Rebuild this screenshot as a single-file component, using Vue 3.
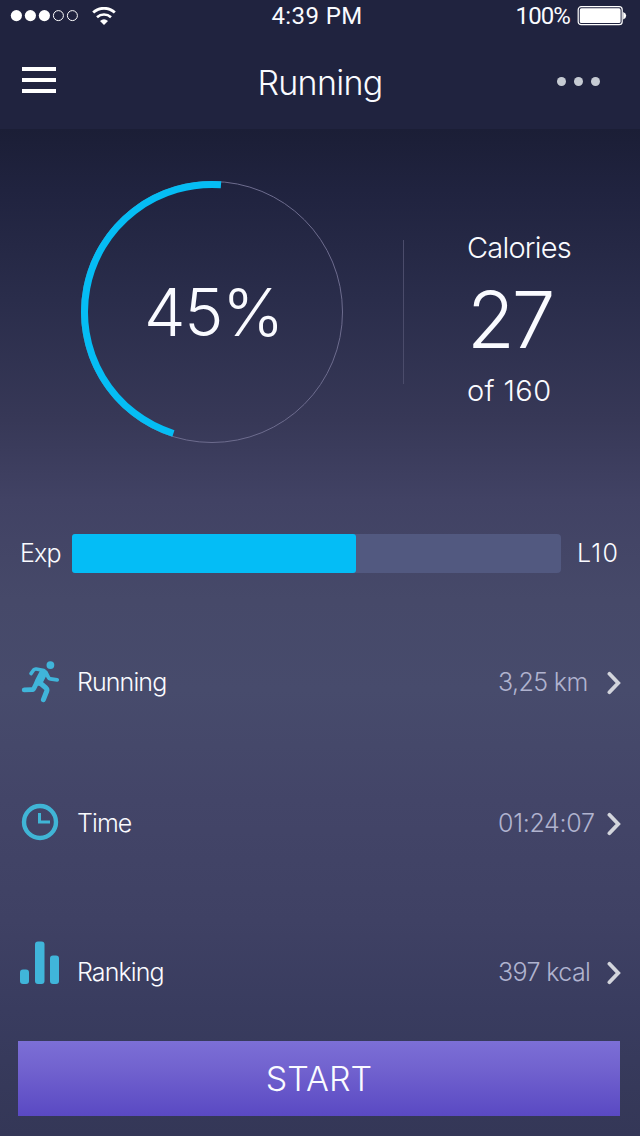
<template>
  <div class="screen">
    <header class="header">
      <div class="status-bar">
        <div class="status-left">
          <svg class="signal" width="68" height="12" viewBox="0 0 68 12">
            <circle
              v-for="n in 5"
              :key="n"
              :cx="n * 14 - 7.6"
              cy="5.6"
              :r="n <= 3 ? 5.6 : 5"
              :fill="n <= 3 ? '#fff' : 'none'"
              :stroke="n <= 3 ? 'none' : '#fff'"
            />
          </svg>
          <svg width="24" height="19" viewBox="0 0 24 19" fill="none" stroke="#fff">
            <path d="M1.2 5.6 A15.6 15.6 0 0 1 22.8 5.6" stroke-width="2.8" />
            <path d="M5 10.2 A10.4 10.4 0 0 1 19 10.2" stroke-width="2.6" />
            <path d="M8 14 A6.2 6.2 0 0 1 16 14 L12 17.9 Z" fill="#fff" stroke="none" />
          </svg>
        </div>
        <span class="clock">4:39 PM</span>
        <div class="status-right">
          <span class="battery-text">100%</span>
          <svg width="50" height="20" viewBox="0 0 50 20">
            <rect x="1.2" y="0.7" width="44" height="18" rx="3" fill="none" stroke="#fff" stroke-width="1.2" />
            <rect x="2.8" y="2.3" width="40.8" height="14.8" rx="1.6" fill="#fff" />
            <path d="M46.2 6 Q49.2 7.2 49.2 9.7 Q49.2 12.2 46.2 13.4 Z" fill="#fff" />
          </svg>
        </div>
      </div>
      <nav class="nav">
        <button class="icon-button menu" aria-label="Menu">
          <i></i><i></i><i></i>
        </button>
        <h1 class="title">Running</h1>
        <button class="icon-button more" aria-label="More">
          <i></i><i></i><i></i>
        </button>
      </nav>
    </header>

    <section class="summary">
      <div class="ring">
        <svg width="264" height="264" viewBox="0 0 264 264" fill="none">
          <circle cx="132" cy="132" r="130.5" stroke="#6d6c8e" stroke-width="1" />
          <path d="M141 4.8 A127.5 127.5 0 0 0 93.4 253.5" stroke="#05bdf4" stroke-width="7" />
        </svg>
        <span class="percent">45%</span>
      </div>
      <div class="divider"></div>
      <div class="calories">
        <span class="small">Calories</span>
        <span class="big">27</span>
        <span class="small goal">of 160</span>
      </div>
    </section>

    <section class="exp">
      <span class="exp-label">Exp</span>
      <div class="bar">
        <div class="bar-fill" :style="{ width: exp + '%' }"></div>
      </div>
      <span class="level">L10</span>
    </section>

    <ul class="list">
      <li v-for="item in items" :key="item.name" class="row" :class="item.name">
        <span class="icon">
          <svg v-if="item.name === 'running'" width="40" height="42" viewBox="0 0 40 42" fill="none" stroke="#40b5da" stroke-linecap="round" stroke-linejoin="round">
            <circle cx="30.4" cy="4.1" r="3.9" fill="#40b5da" stroke="none" />
            <path d="M11 12.6 L13.6 9 Q14.6 7.8 16.2 8 L24 9.6" stroke-width="3.6" />
            <path d="M23.2 12.2 L18.8 20.6" stroke-width="8" />
            <path d="M26 11.5 L28.4 16.4 Q29 17.7 30.4 17.9 L37.2 18.8" stroke-width="3.8" />
            <path d="M16.6 22 L14 27.2 Q13.3 28.7 11.6 28.7 L4.2 28.9" stroke-width="4.8" />
            <path d="M19.5 21.5 L26 27 Q27.4 28.3 26.8 30 L23.4 38.6" stroke-width="5" />
          </svg>
          <svg v-else-if="item.name === 'time'" width="40" height="40" viewBox="0 0 40 40" fill="none" stroke="#40b5d6">
            <circle cx="20" cy="19" r="16" stroke-width="4.4" />
            <path d="M19.5 10 V19 H30" stroke-width="3" />
          </svg>
          <svg v-else width="40" height="44" viewBox="0 0 40 44" fill="#40b5da">
            <rect x="0" y="28.5" width="9" height="14.5" rx="3" />
            <rect x="15" y="0.5" width="9.5" height="42.5" rx="3" />
            <rect x="30" y="14.5" width="9" height="28.5" rx="3" />
          </svg>
        </span>
        <span class="label">{{ item.label }}</span>
        <span class="value">{{ item.value }}</span>
        <svg class="chevron" width="14" height="24" viewBox="0 0 14 24" fill="none">
          <path d="M2.4 2.8 L11.2 12 L2.4 21.2" stroke="#d3d5dc" stroke-width="3.8" stroke-linecap="round" />
        </svg>
      </li>
    </ul>

    <button class="start">START</button>
  </div>
</template>

<script setup>
import { ref } from 'vue'

const exp = ref(58)

const items = [
  { name: 'running', label: 'Running', value: '3,25 km' },
  { name: 'time', label: 'Time', value: '01:24:07' },
  { name: 'ranking', label: 'Ranking', value: '397 kcal' },
]
</script>

<style>
body {
  margin: 0;
  background: #35385a;
}
</style>

<style scoped>
.screen {
  box-sizing: border-box;
  width: 640px;
  height: 1136px;
  display: flex;
  flex-direction: column;
  overflow: hidden;
  color: #fafbff;
  font-family: Inter, "Liberation Sans", sans-serif;
  font-weight: 300;
  white-space: nowrap;
  background: linear-gradient(
    #1b1e36 129px,
    #20233f 190px,
    #2a2d4b 300px,
    #373857 420px,
    #414264 500px,
    #464969 600px,
    #474b6c 690px,
    #434568 800px,
    #3f4164 920px,
    #393c5f 1010px,
    #343757 1136px
  );
}

.header {
  height: 129px;
  background: #20233f;
}

.status-bar {
  height: 32px;
  display: grid;
  grid-template-columns: 1fr auto 1fr;
  align-items: center;
  padding: 0 13px 0 10px;
  font-family: Roboto, sans-serif;
  font-weight: 400;
  font-size: 24px;
  line-height: 32px;
}

.status-left,
.status-right {
  display: flex;
  align-items: center;
}

.status-left {
  gap: 14px;
}

.status-right {
  justify-content: flex-end;
  gap: 7px;
}

.clock {
  margin-right: 3px;
  letter-spacing: 0.4px;
}

.battery-text {
  letter-spacing: -0.9px;
}

.nav {
  height: 97px;
  display: grid;
  grid-template-columns: 1fr auto 1fr;
  align-items: center;
  padding: 0 40px 0 22px;
}

.icon-button {
  display: flex;
  padding: 0;
  border: none;
  background: none;
}

.menu {
  flex-direction: column;
  gap: 7px;
  padding-bottom: 1px;
}

.menu i {
  width: 34px;
  height: 4px;
  background: #fff;
}

.more {
  justify-self: end;
  gap: 8px;
  padding-top: 2px;
}

.more i {
  width: 9px;
  height: 9px;
  border-radius: 50%;
  background: #c6cbd3;
}

.title {
  margin: 4px 0 0 18px;
  font-size: 34px;
  font-weight: 300;
  line-height: 40px;
  letter-spacing: -0.7px;
}

.summary {
  height: 366px;
  display: flex;
  align-items: center;
  padding-left: 80px;
}

.ring {
  display: grid;
  place-items: center;
}

.ring > * {
  grid-area: 1 / 1;
}

.percent {
  padding-left: 3px;
  font-size: 66px;
  line-height: 80px;
  letter-spacing: -1.2px;
}

.divider {
  width: 1px;
  height: 144px;
  margin: 0 63px 0 59px;
  background: #4b4c6b;
}

.calories {
  display: flex;
  flex-direction: column;
  padding-top: 15px;
}

.small {
  font-size: 29px;
  line-height: 36px;
  letter-spacing: -0.8px;
}

.big {
  font-size: 78px;
  line-height: 108px;
  letter-spacing: -3px;
}

.goal {
  margin-top: -1px;
  letter-spacing: 0.4px;
}

.exp {
  height: 39px;
  display: flex;
  align-items: center;
  margin-top: 39px;
  padding-left: 20px;
  font-size: 25px;
  line-height: 39px;
}

.exp-label {
  width: 52px;
  letter-spacing: -0.8px;
}

.bar {
  width: 489px;
  height: 39px;
  border-radius: 4px;
  background: #525980;
}

.bar-fill {
  height: 100%;
  border-radius: 3px;
  background: #04bdf6;
}

.level {
  margin-left: 16px;
  letter-spacing: 1.3px;
}

.list {
  height: 468px;
  margin: 0;
  padding: 0;
  list-style: none;
}

.row {
  height: 44px;
  display: flex;
  align-items: center;
  padding: 0 19px 0 20px;
  font-size: 25px;
  line-height: 44px;
}

.running {
  margin-top: 87px;
}

.time {
  margin-top: 97px;
}

.ranking {
  margin-top: 105px;
}

.icon {
  width: 57px;
  display: flex;
}

.ranking .icon {
  margin-bottom: 18px;
}

.label {
  flex: 1;
  letter-spacing: -0.9px;
}

.value {
  width: 109px;
  color: #b0b3cf;
  letter-spacing: -0.6px;
}

.time .value {
  letter-spacing: -0.3px;
}

.chevron {
  margin-top: 2px;
}

.start {
  width: 602px;
  height: 75px;
  margin-left: 18px;
  padding: 0;
  border: none;
  color: #fafbff;
  font: 300 34px/75px Inter, "Liberation Sans", sans-serif;
  letter-spacing: 0;
  background: linear-gradient(#7c6fd6, #7263cf 35%, #5a49c3);
}
</style>
